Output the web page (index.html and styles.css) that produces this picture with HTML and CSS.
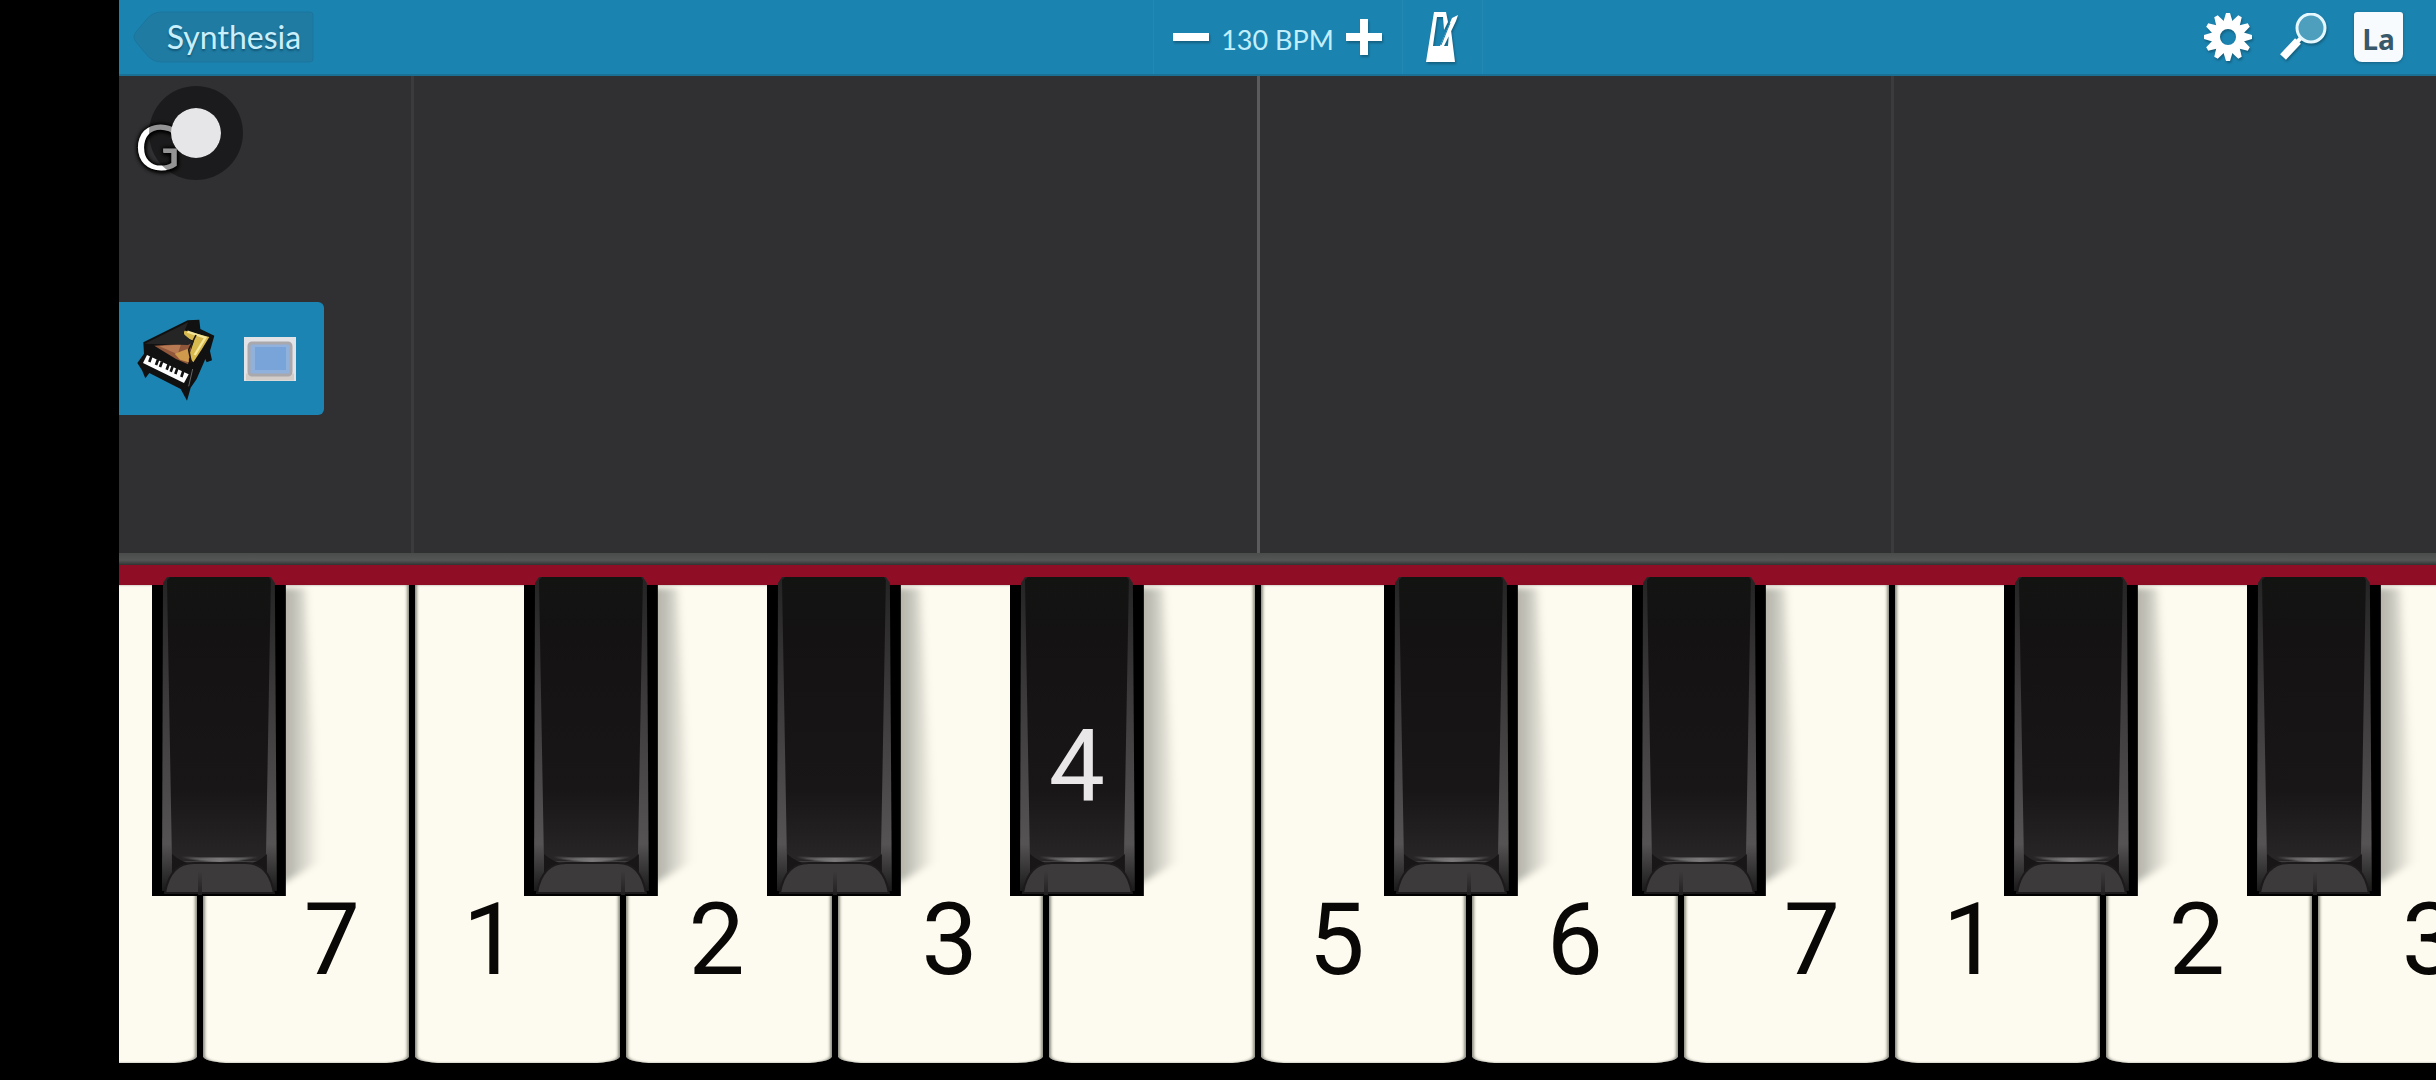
FILE: index.html
```html
<!DOCTYPE html>
<html lang="en">
<head>
    <meta charset="UTF-8">
    <meta name="viewport" content="width=device-width, initial-scale=1.0">
    <title>Synthesia</title>
    <link rel="stylesheet" href="styles.css">
</head>

<body>
    <!-- shared shapes -->
    <svg class="defs" aria-hidden="true">
        <defs>
            <linearGradient id="face" x1="0" y1="0" x2="0" y2="1">
                <stop offset="0" stop-color="#121412"/>
                <stop offset=".2" stop-color="#141213"/>
                <stop offset=".75" stop-color="#181617"/>
                <stop offset="1" stop-color="#282627"/>
            </linearGradient>
            <linearGradient id="bevel" x1="0" y1="0" x2="0" y2="1">
                <stop offset="0" stop-color="#252424"/>
                <stop offset=".4" stop-color="#3d3b3b"/>
                <stop offset=".85" stop-color="#555353"/>
                <stop offset="1" stop-color="#1b1a1a"/>
            </linearGradient>
            <linearGradient id="shade" x1="0" y1="0" x2="1" y2="0">
                <stop offset="0" stop-color="#000" stop-opacity=".32"/>
                <stop offset=".45" stop-color="#000" stop-opacity=".28"/>
                <stop offset="1" stop-color="#000" stop-opacity="0"/>
            </linearGradient>
            <linearGradient id="lip" x1="0" y1="0" x2="1" y2="0">
                <stop offset="0" stop-color="#777" stop-opacity="0"/>
                <stop offset=".5" stop-color="#7a7878"/>
                <stop offset="1" stop-color="#777" stop-opacity="0"/>
            </linearGradient>
            <filter id="soft" x="-20%" y="-5%" width="140%" height="110%">
                <feGaussianBlur stdDeviation="4 3"/>
            </filter>
            <symbol id="black-key" viewBox="0 0 180 320" preserveAspectRatio="none">
                <path d="M110 11H153L168 284L128 308H110z" fill="url(#shade)" filter="url(#soft)"/>
                <path d="M0 8H134V319H0z" fill="#000"/>
                <path d="M11 6L15 0H119L123 6L125 314H10z" fill="url(#bevel)"/>
                <path d="M15 3L18 0H117L119 3L114 284H20z" fill="url(#face)"/>
                <path d="M20 277Q30 286 40 286H96Q106 286 115 277V300H20z" fill="#181617"/>
                <path d="M29 280Q68 288 107 280Q68 283 29 280z" fill="url(#lip)" stroke="url(#lip)" stroke-width="2"/>
                <path d="M13 316Q18 286 42 286H94Q117 286 122 316z" fill="#3c3a3b" stroke="#1c1a1b" stroke-width="2"/>
            </symbol>
        </defs>
    </svg>

    <div class="stage">
        <header class="topbar">
            <button class="back" type="button">
                <svg class="back-shape" viewBox="0 0 182 52" preserveAspectRatio="none" aria-hidden="true">
                    <path d="M30 1H178Q181 1 181 4V48Q181 51 178 51H30Q20 51 14 43L4 31Q0 26 4 21L14 9Q20 1 30 1z" fill="#1f7ba2" stroke="#1b769e"/>
                </svg>
                <span class="back-text">Synthesia</span>
            </button>

            <div class="tempo">
                <button type="button" aria-label="Slower">
                    <svg width="36" height="36" viewBox="0 0 36 36"><path d="M0 14H36V22H0z" fill="#fff"/></svg>
                </button>
                <span class="bpm">130 BPM</span>
                <button type="button" aria-label="Faster">
                    <svg width="36" height="36" viewBox="0 0 36 36"><path d="M14 0H22V14H36V22H22V36H14V22H0V14H14z" fill="#fff"/></svg>
                </button>
            </div>

            <div class="right">
                <button class="metronome" type="button" aria-label="Metronome">
                    <svg width="32" height="50" viewBox="0 0 32 50">
                        <path d="M8 0H20L22 10L18 18L17 5H11L7 34H14L26 6L32 3L30 9L20 30L18 34H22L23 20L25 18L29 50H0z" fill="#fff"/>
                        <path d="M24 11L15 33" stroke="#1c83b0"/>
                    </svg>
                </button>
                <div class="tools">
                    <button type="button" aria-label="Settings">
                        <svg width="48" height="48" viewBox="-24 -24 48 48">
                            <g fill="#fff">
                                <path id="tooth" d="M-5 -14L-2 -24H2L5 -14z"/>
                                <use href="#tooth" transform="rotate(30)"/>
                                <use href="#tooth" transform="rotate(60)"/>
                                <use href="#tooth" transform="rotate(90)"/>
                                <use href="#tooth" transform="rotate(120)"/>
                                <use href="#tooth" transform="rotate(150)"/>
                                <use href="#tooth" transform="rotate(180)"/>
                                <use href="#tooth" transform="rotate(210)"/>
                                <use href="#tooth" transform="rotate(240)"/>
                                <use href="#tooth" transform="rotate(270)"/>
                                <use href="#tooth" transform="rotate(300)"/>
                                <use href="#tooth" transform="rotate(330)"/>
                            </g>
                            <circle r="12" fill="none" stroke="#fff" stroke-width="8"/>
                        </svg>
                    </button>
                    <button type="button" aria-label="Zoom">
                        <svg width="48" height="48" viewBox="0 0 48 48">
                            <path d="M4 44L19 28" stroke="#fff" stroke-width="8"/>
                            <path d="M17 30L22 25" stroke="#fff" stroke-width="4"/>
                            <circle cx="32" cy="15" r="14" fill="#4d9fbd" stroke="#e6f8ff" stroke-width="3"/>
                        </svg>
                    </button>
                    <button class="labels" type="button">La</button>
                </div>
            </div>
        </header>

        <main class="roll">
            <ul class="lanes" aria-hidden="true">
                <li></li>
                <li class="line"></li>
                <li></li>
                <li></li>
                <li></li>
                <li class="line octave"></li>
                <li></li>
                <li></li>
                <li class="line"></li>
            </ul>
            <p class="chord">G</p>
            <span class="touch"></span>
            <div class="track">
                <svg width="80" height="84" viewBox="80 76 240 252" aria-hidden="true">
                    <path d="M102 152L235 86L270 84L273 112L315 132L302 178L308 206L292 212L288 202L262 262L244 288L233 327L214 292L120 244L108 260L98 236L84 214L104 186z" fill="#111"/>
                    <path d="M135 162L248 154L236 218L200 202z" fill="#90573b"/>
                    <path d="M150 164L215 158L205 188z" fill="#b77a53"/>
                    <path d="M196 186L240 170L238 212L212 204z" fill="#d09a4d"/>
                    <path d="M222 116L262 126L300 136L278 172L252 212L238 196L254 148L226 136z" fill="#d8b94e"/>
                    <path d="M234 120L288 138L256 190" fill="none" stroke="#f5e69a" stroke-width="7"/>
                    <path d="M260 130L238 174L246 214" fill="none" stroke="#221a12" stroke-width="5"/>
                    <path d="M106 156L236 92L222 126L252 152L236 160z" fill="#252525"/>
                    <path d="M113 190L238 248L224 274L101 214z" fill="#fff"/>
                    <path d="M126 194L120 211M146 204L140 220M158 210L152 226M178 218L172 234M190 224L184 240M204 230L198 247M222 238L216 256" stroke="#111" stroke-width="8"/>
                    <path d="M250 232L238 284" stroke="#666" stroke-width="3"/>
                </svg>
                <button type="button" aria-label="Track colour">
                    <svg width="52" height="44" viewBox="0 0 52 44">
                        <path d="M0 0H52V44H0z" fill="#e2e3e6"/>
                        <path d="M2 40H50" stroke="#d3cdc9" stroke-width="7"/>
                        <rect x="5" y="6" width="42" height="32" rx="3" fill="#8fb1dc" stroke="#a9a8ac" stroke-width="3"/>
                        <path d="M11 10H42V33H11z" fill="#79a4da"/>
                    </svg>
                </button>
            </div>
        </main>

        <div class="rail"></div>
        <div class="felt"></div>

        <div class="keyboard">
            <div class="key d">
                <button class="white" type="button" aria-label="D"></button>
                <button class="black" type="button" aria-label="D sharp"><svg><use href="#black-key"/></svg></button>
            </div>
            <div class="key e">
                <button class="white" type="button">7</button>
            </div>
            <div class="key f">
                <button class="white" type="button">1</button>
                <button class="black" type="button" aria-label="F sharp"><svg><use href="#black-key"/></svg></button>
            </div>
            <div class="key g">
                <button class="white" type="button">2</button>
                <button class="black" type="button" aria-label="G sharp"><svg><use href="#black-key"/></svg></button>
            </div>
            <div class="key a">
                <button class="white" type="button">3</button>
                <button class="black" type="button"><svg><use href="#black-key"/></svg><span>4</span></button>
            </div>
            <div class="key b">
                <button class="white" type="button" aria-label="B"></button>
            </div>
            <div class="key c">
                <button class="white" type="button">5</button>
                <button class="black" type="button" aria-label="C sharp"><svg><use href="#black-key"/></svg></button>
            </div>
            <div class="key d">
                <button class="white" type="button">6</button>
                <button class="black" type="button" aria-label="D sharp"><svg><use href="#black-key"/></svg></button>
            </div>
            <div class="key e">
                <button class="white" type="button">7</button>
            </div>
            <div class="key f">
                <button class="white" type="button">1</button>
                <button class="black" type="button" aria-label="F sharp"><svg><use href="#black-key"/></svg></button>
            </div>
            <div class="key g">
                <button class="white" type="button">2</button>
                <button class="black" type="button" aria-label="G sharp"><svg><use href="#black-key"/></svg></button>
            </div>
            <div class="key a">
                <button class="white" type="button">3</button>
            </div>
        </div>
    </div>
</body>

</html>
```

FILE: styles.css
```css
* {
    margin: 0;
    padding: 0;
    box-sizing: border-box;
}

body {
    background: #000;
    font-family: Lato, "Open Sans", sans-serif;
    overflow: hidden;
}

button {
    border: 0;
    background: none;
    color: inherit;
    font: inherit;
    cursor: pointer;
}

svg {
    display: block;
}

.defs {
    position: absolute;
    width: 0;
    height: 0;
}

.stage {
    display: flex;
    flex-direction: column;
    min-height: 100vh;
    margin-left: 119px;
    padding-bottom: 17px;
    overflow: hidden;
}

/* top bar */
.topbar {
    display: grid;
    grid-template-columns: 1fr 250px 1fr;
    height: 76px;
    background: #1b83b0;
    border-bottom: 2px solid #1a7095;
}

.back {
    position: relative;
    justify-self: start;
    width: 182px;
    height: 52px;
    margin: 11px 0 0 13px;
    padding-left: 22px;
    font-size: 32px;
    line-height: 52px;
    color: #c9effc;
    text-shadow: 0 2px 2px #135877;
}

.back-shape {
    position: absolute;
    top: 0;
    left: 0;
    width: 100%;
    height: 100%;
}

.back-text {
    position: relative;
}

.tempo {
    display: flex;
    align-items: center;
    justify-content: center;
    gap: 12px;
    border: 1px solid #2389b4;
    border-width: 0 1px;
}

.bpm {
    padding-top: 6px;
    font-size: 27px;
    line-height: 32px;
    color: #c2effc;
}

.topbar svg {
    filter: drop-shadow(1px 2px 1px #14607f);
}

.topbar .back-shape {
    filter: none;
}

.right {
    display: flex;
    justify-content: space-between;
    padding-right: 33px;
}

.metronome {
    display: flex;
    align-items: center;
    justify-content: center;
    width: 80px;
    border-right: 1px solid #2389b4;
}

.tools {
    display: flex;
    align-items: center;
    gap: 27px;
}

.labels {
    width: 49px;
    height: 50px;
    padding: 4px 0 0;
    border-radius: 3px 3px 8px 8px;
    background: #f8fbfd;
    color: #37596a;
    font-family: "Open Sans", sans-serif;
    font-size: 28px;
    font-weight: bold;
    line-height: 36px;
    box-shadow: 0 1px 3px #14607f;
}

/* falling notes area */
.roll {
    position: relative;
    flex: 1;
    min-height: 400px;
    padding-top: 226px;
    background: #303032;
}

/* lanes and keys start off screen and share one column width */
.lanes,
.keyboard {
    display: flex;
    width: calc(100% + 130px);
    margin-left: -130px;
}

.lanes {
    position: absolute;
    top: 0;
    left: 0;
    height: 100%;
    list-style: none;
}

.lanes li,
.key {
    flex: 0 0 calc((100% - 130px) * 0.09126);
}

.lanes li {
    position: relative;
}

.lanes .line::after {
    content: '';
    position: absolute;
    top: 0;
    right: -2px;
    width: 3px;
    height: 100%;
    background: #3b3b3d;
}

.lanes .octave::after {
    background: #5b5b5d;
}

.chord {
    position: absolute;
    top: 34px;
    left: 16px;
    font-size: 62px;
    line-height: 72px;
    color: #fff;
    text-shadow: 0 0 4px #000, 0 0 4px #000, 1px 2px 4px #000;
}

.touch {
    position: absolute;
    top: 10px;
    left: 30px;
    width: 94px;
    height: 94px;
    border: 22px solid rgba(0, 0, 0, .42);
    border-radius: 50%;
    background: #e6e5e7;
    background-clip: padding-box;
}

.track {
    position: relative;
    display: flex;
    align-items: center;
    gap: 28px;
    width: 205px;
    height: 113px;
    padding-left: 17px;
    border-radius: 0 6px 6px 0;
    background: #1b84b2;
}

.rail {
    height: 12px;
    background: linear-gradient(#4a4c4b, #535654 60%, #303432);
}

.felt {
    height: 20px;
    background: #8f0d25;
}

/* keyboard */
.keyboard {
    height: 478px;
}

.key {
    position: relative;
    padding: 0 3px;
    background: #000;
}

.white {
    display: flex;
    align-items: flex-end;
    justify-content: center;
    width: 100%;
    height: 100%;
    padding-bottom: 73px;
    border-radius: 0 0 28px 28px / 0 0 7px 7px;
    background: #fdfbef;
    box-shadow: inset 3px 0 3px -1px #8d8c80, inset -3px 0 3px -1px #8d8c80;
    color: #0a0806;
    font-family: Roboto, sans-serif;
    font-size: 100px;
    line-height: 100px;
}

.e .white {
    padding-left: 25%;
}

.f .white,
.c .white {
    padding-right: 26%;
}

.g .white {
    padding-right: 12%;
}

.a .white {
    padding-left: 9%;
}

.black {
    position: absolute;
    top: -8px;
    z-index: 1;
    width: 63%;
    height: 320px;
    color: #e9e7e8;
    font-family: Roboto, sans-serif;
    font-size: 100px;
    line-height: 100px;
}

.black svg {
    position: absolute;
    top: 0;
    left: 0;
    width: 135%;
    height: 100%;
}

.black span {
    position: relative;
    display: block;
    padding-top: 60px;
}

.c .black {
    left: 60%;
}

.d .black {
    left: 77%;
}

.f .black {
    left: 53%;
}

.g .black {
    left: 68%;
}

.a .black {
    left: 83%;
}

/* seam reflected on the front of the black keys */
.black + .seam,
.key:not(.e):not(.b)::after {
    content: '';
    position: absolute;
    top: 286px;
    right: -2px;
    z-index: 2;
    width: 4px;
    height: 24px;
    background: linear-gradient(transparent, #222021);
}
```
